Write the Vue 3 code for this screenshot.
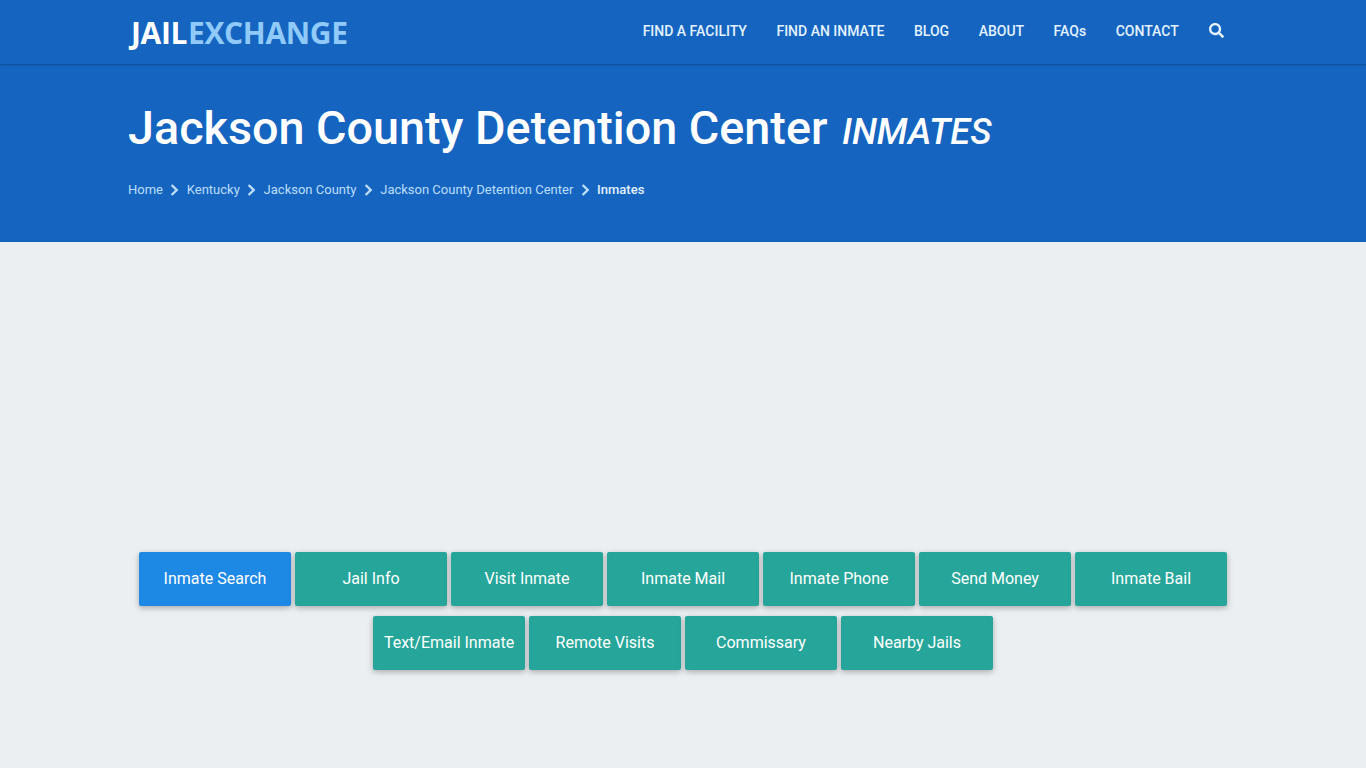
<script setup>
const nav = ['FIND A FACILITY', 'FIND AN INMATE', 'BLOG', 'ABOUT', 'FAQs', 'CONTACT']
const crumbs = ['Home', 'Kentucky', 'Jackson County', 'Jackson County Detention Center']
const buttons = ['Inmate Search', 'Jail Info', 'Visit Inmate', 'Inmate Mail', 'Inmate Phone', 'Send Money', 'Inmate Bail', 'Text/Email Inmate', 'Remote Visits', 'Commissary', 'Nearby Jails']
</script>

<template>
  <div class="page">
    <header class="topbar">
      <div class="container bar-inner">
        <a class="logo"><span class="logo-a">JAIL</span><span class="logo-b">EXCHANGE</span></a>
        <nav class="nav">
          <a v-for="n in nav" :key="n" class="nav-link">{{ n }}</a>
          <a class="nav-search" aria-label="Search">
            <svg width="15" height="15" viewBox="0 0 512 512"><path fill="currentColor" d="M505 442.700L405.300 343c-4.500-4.500-10.600-7-17-7H372c27.600-35.300 44-79.700 44-128C416 93.100 322.900 0 208 0S0 93.100 0 208s93.100 208 208 208c48.300 0 92.700-16.400 128-44v16.300c0 6.400 2.500 12.500 7 17l99.700 99.700c9.400 9.400 24.600 9.400 33.900 0l28.300-28.300c9.400-9.400 9.400-24.600.1-34zM208 336c-70.700 0-128-57.200-128-128 0-70.700 57.200-128 128-128 70.700 0 128 57.200 128 128 0 70.700-57.200 128-128 128z"/></svg>
          </a>
        </nav>
      </div>
    </header>
    <section class="hero">
      <div class="container">
        <h1 class="title">Jackson County Detention Center <em class="title-em">INMATES</em></h1>
        <div class="crumbs">
          <template v-for="c in crumbs" :key="c">
            <a class="crumb">{{ c }}</a>
            <svg class="chev" width="9" height="12" viewBox="0 0 9 12"><path d="M1.600 1 6.700 6l-5.100 5" fill="none" stroke="currentColor" stroke-width="2.400"/></svg>
          </template>
          <span class="crumb-current">Inmates</span>
        </div>
      </div>
    </section>
    <main class="content">
      <div class="btns">
        <a v-for="(b, i) in buttons" :key="b" class="btn" :class="{ active: i === 0 }"><span class="btn-label">{{ b }}</span></a>
      </div>
    </main>
  </div>
</template>

<style>
html, body { margin: 0; background: #eceff1; }
</style>

<style scoped>
.page { min-height: 768px; background: #eceff1; font-family: Roboto, sans-serif; overflow: hidden; }
.container { width: 1110px; margin: 0 auto; }
.topbar { height: 64px; background: #1565c0; border-bottom: 1px solid #0e52a3; box-shadow: 0 1px 2px rgba(0,0,0,.12); position: relative; }
.bar-inner { display: flex; align-items: center; justify-content: space-between; height: 64px; }
.logo { font-family: "Open Sans", sans-serif; font-weight: 700; font-size: 30px; letter-spacing: -.37px; line-height: 1; margin-top: 2px; padding-left: 3px; }
.logo-a { color: #fff; }
.logo-b { color: #90caf9; margin-left: 1px; }
.nav { display: flex; align-items: center; gap: 29.5px; margin-top: -3px; padding-right: 14px; }
.nav-link { color: #e3f2fd; font-size: 14px; font-weight: 500; white-space: nowrap; }
.nav-search { color: #e3f2fd; display: flex; margin-left: .8px; }
.hero { height: 177px; background: #1565c0; }
.title { margin: 0; padding-top: 34px; color: #fff; font-size: 46.72px; font-weight: 500; line-height: 58px; }
.title-em { font-size: 36.2px; font-weight: 500; margin-left: 3px; }
.crumbs { display: flex; align-items: center; margin-top: 19px; font-size: 13px; line-height: 20px; }
.crumb { color: #bbdefb; }
.chev { color: #bbdefb; margin: 0 7.500px 0 7.300px; }
.crumb-current { color: #e3f2fd; font-weight: 500; }
.content { padding-top: 305px; }
.btns { width: 1110px; margin: 0 auto; display: flex; flex-wrap: wrap; justify-content: center; }
.btn { box-sizing: border-box; width: 152px; height: 54px; margin: 5px 2px; display: flex; align-items: center; justify-content: center; background: #26a69a; color: #fff; font-size: 16px; border-radius: 2px; box-shadow: 0 2px 5px rgba(0,0,0,.2), 0 2px 8px rgba(0,0,0,.1); white-space: nowrap; }
.btn-label { margin-top: -2px; }
.btn.active { background: #1e88e5; }
</style>
